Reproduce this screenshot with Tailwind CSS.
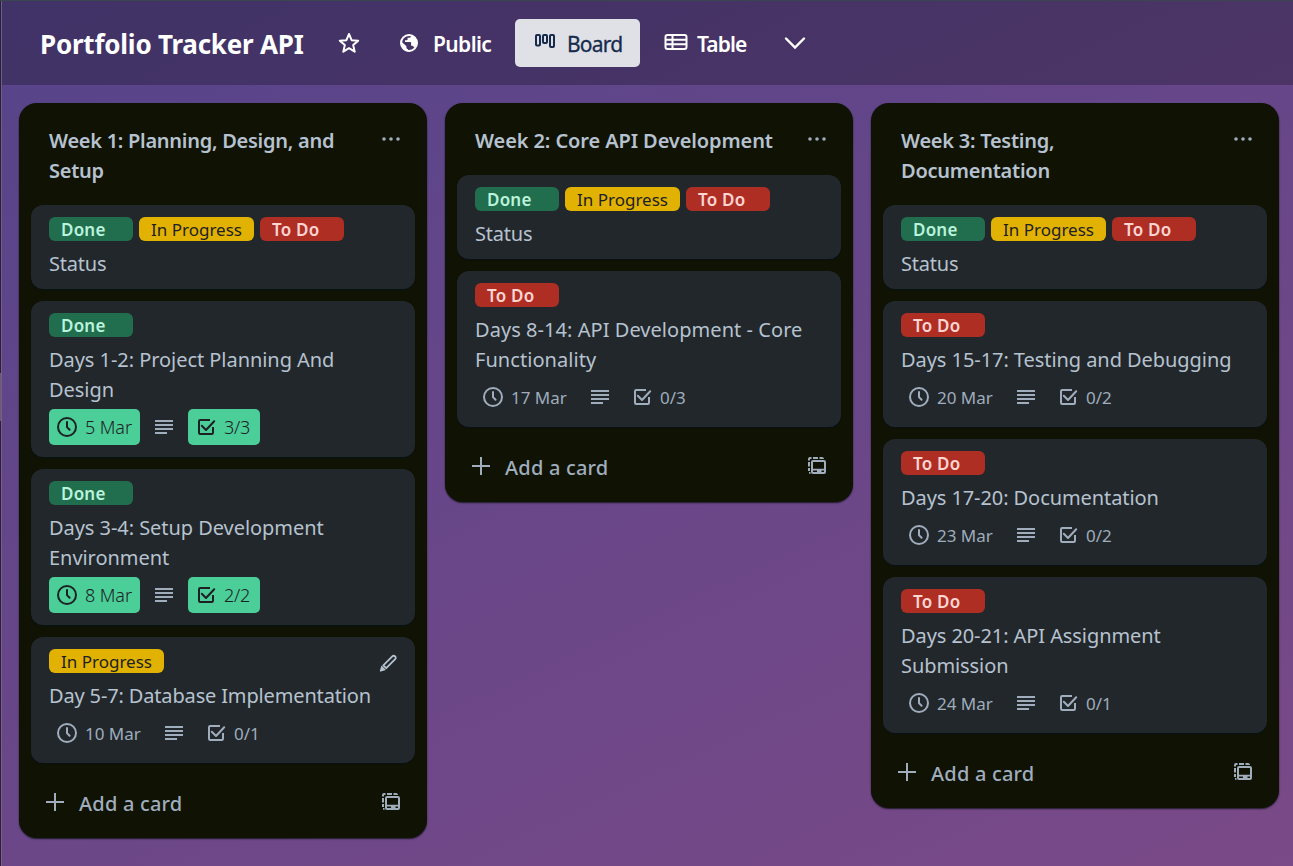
<!DOCTYPE html>
<html lang="en">
<head>
<meta charset="utf-8">
<title>Portfolio Tracker API</title>
<script src="https://cdn.jsdelivr.net/npm/@tailwindcss/browser@4"></script>
</head>
<body class="h-[866px] w-[1293px] overflow-hidden bg-[#56448a] font-['Noto_Sans','Open_Sans',sans-serif] text-[#b6c2cf]">

<svg class="hidden">
  <symbol id="clock" viewBox="0 0 24 24"><circle cx="12" cy="12" r="9" fill="none" stroke="currentColor" stroke-width="2"/><path d="M12 7v5.2l2.6 2.6" fill="none" stroke="currentColor" stroke-width="2" stroke-linecap="round"/></symbol>
  <symbol id="desc" viewBox="0 0 24 24"><path d="M3 5h18v2H3zM3 9h18v2H3zM3 13h18v2H3zM3 17h12v2H3z" fill="currentColor"/></symbol>
  <symbol id="check" viewBox="0 0 24 24"><path d="M16 5H6.2Q5 5 5 6.200v11.600Q5 19 6.200 19h11.600q1.200 0 1.200-1.200V12" fill="none" stroke="currentColor" stroke-width="2"/><path d="M7.800 10.800l4.200 4.200 8.200-8.800" fill="none" stroke="currentColor" stroke-width="2" stroke-linecap="round" stroke-linejoin="round"/></symbol>
  <symbol id="dots" viewBox="0 0 24 24"><g fill="currentColor"><circle cx="5" cy="12" r="1.800"/><circle cx="12" cy="12" r="1.800"/><circle cx="19" cy="12" r="1.800"/></g></symbol>
  <symbol id="plus" viewBox="0 0 24 24"><path d="M12 3v18M3 12h18" fill="none" stroke="currentColor" stroke-width="2"/></symbol>
  <symbol id="template" viewBox="0 0 24 24"><path d="M3 6.500V5q0-2 2-2h1.500v2H5v1.500zM8 3h5v2H8zM14.500 3H17q1.500 0 2 1.500V5h-4.500zM3 8h2v4.500H3zM3 14h2v3H3zM4 18h1.500v2H5q-1 0-1-1z" fill="currentColor"/><path fill-rule="evenodd" d="M8 6h11a2 2 0 0 1 2 2v10a2 2 0 0 1-2 2H8a2 2 0 0 1-2-2V8a2 2 0 0 1 2-2zm0 2v6.800h11V8zm0 8.500V18h4v-1.500zm8.500 0V18H19v-1.500z" fill="currentColor"/></symbol>
  <symbol id="pencil" viewBox="0 0 24 24"><path d="M7.300 14.300L16.300 5.300a1.900 1.900 0 0 1 2.700 0l.2.2a1.900 1.900 0 0 1 0 2.700L10.200 17.200z" fill="none" stroke="currentColor" stroke-width="1.800" stroke-linejoin="round"/><path d="M5.500 14.500l4.400 4.400-5 1.700q-1.200.2-1-1z" fill="currentColor"/></symbol>
</svg>

<div class="flex h-full w-full flex-col">
  <div class="h-px shrink-0 bg-[#394650]"></div>
  <div class="flex min-h-0 flex-1">
    <div class="flex w-px shrink-0 flex-col bg-[#24232f] pt-[372px]"><div class="h-12 bg-[#626069]"></div></div>

    <div class="flex min-w-0 flex-1 flex-col border-l border-white/10 bg-linear-[155deg] from-[#56448a] to-[#7a4987]">
      <header class="flex h-[84px] shrink-0 items-center bg-black/25 pl-[38px] text-[21px] font-semibold text-white">
        <h1 class="w-[265px] pt-[3px] text-[26px] font-bold tracking-[-0.22px] whitespace-nowrap">Portfolio Tracker API</h1>
        <svg class="mb-px ml-8 size-6" viewBox="0 0 24 24" fill="none" stroke="#fff" stroke-width="2" stroke-linejoin="round"><path d="M12 3l2.600 6.200 6.600.5-5 4.400 1.500 6.600L12 17.200l-5.700 3.500 1.500-6.600-5-4.400 6.600-.5z"/></svg>
        <svg class="mb-px ml-9 size-6" viewBox="0 0 24 24" fill="none"><circle cx="12" cy="12" r="8" stroke="#fff" stroke-width="2"/><path d="M4 10.200l5.400 5v1.200a1.500 1.500 0 0 0 1.500 1.500v2.500C6 19.700 3.500 15 4 10.200zM14.200 3.900v1a1.800 1.800 0 0 1-1.800 1.800h-1.800v1.600a.9.900 0 0 1-.9.900H8v1.900h5.200a.9.900 0 0 1 .9.900v2.700h.9a1.800 1.800 0 0 1 1.700 1.300l.6.700c2.500-2.600 3-5.400 2.200-7.900-.8-2.600-2.500-4.200-5.300-4.900z" fill="#fff"/></svg>
        <span class="ml-3 w-[82px] pt-1 tracking-[-0.6px]">Public</span>
        <div class="flex h-12 w-[125px] items-center rounded-[5px] bg-[#dfe1e6] pl-[18px] font-normal text-[#172b4d]">
          <svg class="mb-1 h-6 w-6" viewBox="0 0 24 24" fill="none" stroke="currentColor" stroke-width="2"><rect x="3" y="6" width="4" height="10.500" rx="1"/><rect x="10" y="6" width="4" height="8" rx="1"/><rect x="17" y="6" width="4" height="12" rx="1"/></svg>
          <span class="ml-2.5 pt-1 tracking-[-0.8px] [-webkit-text-stroke:0.3px]">Board</span>
        </div>
        <svg class="mb-[3px] ml-6 h-6 w-6" viewBox="0 0 24 24" fill="none" stroke="#fff" stroke-width="2"><rect x="1.500" y="5" width="21" height="14" rx="2"/><path d="M8.500 5v14M1.500 9.700h21M1.500 14.300h21"/></svg>
        <span class="ml-[9px] w-[52px] pt-1 tracking-[-0.9px]">Table</span>
        <svg class="ml-[34px] size-6" viewBox="0 0 24 24" fill="none" stroke="#fff" stroke-width="2.400" stroke-linecap="round"><path d="M3 7.500l9 9 9-9"/></svg>
      </header>

      <main class="flex items-start gap-[18px] pt-[18px] pl-[17px] text-xl leading-[30px]">

        <section class="w-[408px] rounded-[18px] bg-[#101204] px-3 shadow-[0_1px_1px_#09121680,0_1px_2px_#09121680]">
          <div class="flex justify-between pt-[23px] pr-3 pb-[19px] pl-[18px]">
            <h2 class="w-[300px] font-semibold tracking-[-0.27px]">Week 1: Planning, Design, and Setup</h2>
            <svg class="mt-px size-6 text-[#9fadbc]"><use href="#dots"/></svg>
          </div>
          <div class="flex flex-col gap-3">
            <article class="rounded-xl bg-[#22272b] px-[18px] py-3 shadow-[0_1px_1px_#091216]">
              <div class="mb-2 flex gap-1.5 text-[17px] leading-[26px]">
                <span class="h-6 w-21 rounded-md bg-[#216e4e] pl-3 font-semibold tracking-[0.2px] text-[#baf3db]">Done</span>
                <span class="h-6 w-[115px] rounded-md bg-[#e2b203] pl-3 whitespace-nowrap text-[#1d2125]">In Progress</span>
                <span class="h-6 w-21 rounded-md bg-[#ae2e24] pl-3 font-semibold tracking-[0.2px] text-[#ffd5d2]">To Do</span>
              </div>
              <p class="-mb-0.5 tracking-[-0.2px]">Status</p>
            </article>
            <article class="rounded-xl bg-[#22272b] px-[18px] py-3 shadow-[0_1px_1px_#091216]">
              <div class="mb-2 flex text-[17px] leading-[26px]"><span class="h-6 w-21 rounded-md bg-[#216e4e] pl-3 font-semibold tracking-[0.2px] text-[#baf3db]">Done</span></div>
              <p class="-mb-0.5 tracking-[-0.05px]">Days 1-2: Project Planning And Design</p>
              <div class="mt-1.5 flex gap-1.5 text-lg leading-9 font-light text-[#1d2125]">
                <span class="flex h-9 w-[91px] items-center gap-1.5 rounded-[5px] bg-[#4bce97] pl-1.5 tracking-[-0.1px] whitespace-nowrap"><svg class="size-6"><use href="#clock"/></svg>5 Mar</span>
                <span class="flex h-9 items-center px-1.5 text-[#9fadbc]"><svg class="size-6"><use href="#desc"/></svg></span>
                <span class="flex h-9 w-18 items-center gap-1.5 rounded-[5px] bg-[#4bce97] pl-1.5 tracking-[-0.3px]"><svg class="size-6"><use href="#check"/></svg>3/3</span>
              </div>
            </article>
            <article class="rounded-xl bg-[#22272b] px-[18px] py-3 shadow-[0_1px_1px_#091216]">
              <div class="mb-2 flex text-[17px] leading-[26px]"><span class="h-6 w-21 rounded-md bg-[#216e4e] pl-3 font-semibold tracking-[0.2px] text-[#baf3db]">Done</span></div>
              <p class="-mb-0.5 tracking-[-0.05px]">Days 3-4: Setup Development Environment</p>
              <div class="mt-1.5 flex gap-1.5 text-lg leading-9 font-light text-[#1d2125]">
                <span class="flex h-9 w-[91px] items-center gap-1.5 rounded-[5px] bg-[#4bce97] pl-1.5 tracking-[-0.1px] whitespace-nowrap"><svg class="size-6"><use href="#clock"/></svg>8 Mar</span>
                <span class="flex h-9 items-center px-1.5 text-[#9fadbc]"><svg class="size-6"><use href="#desc"/></svg></span>
                <span class="flex h-9 w-18 items-center gap-1.5 rounded-[5px] bg-[#4bce97] pl-1.5 tracking-[-0.3px]"><svg class="size-6"><use href="#check"/></svg>2/2</span>
              </div>
            </article>
            <article class="relative rounded-xl bg-[#22272b] px-[18px] py-3 shadow-[0_1px_1px_#091216]">
              <svg class="absolute top-3.5 right-[15px] size-6"><use href="#pencil"/></svg>
              <div class="mb-2 flex text-[17px] leading-[26px]"><span class="h-6 w-[115px] rounded-md bg-[#e2b203] pl-3 whitespace-nowrap text-[#1d2125]">In Progress</span></div>
              <p class="-mb-0.5 tracking-[-0.15px]">Day 5-7: Database Implementation</p>
              <div class="mt-1.5 flex gap-1.5 text-[17px] leading-9 text-[#9fadbc]">
                <span class="flex h-9 w-[101px] items-center gap-1.5 pl-1.5 whitespace-nowrap"><svg class="size-6"><use href="#clock"/></svg><span class="pt-px">10 Mar</span></span>
                <span class="flex h-9 items-center px-1.5"><svg class="size-6"><use href="#desc"/></svg></span>
                <span class="flex h-9 w-18 items-center gap-1.5 pl-1.5"><svg class="size-6"><use href="#check"/></svg><span class="pt-px">0/1</span></span>
              </div>
            </article>
          </div>
          <div class="flex h-[75px] items-center pt-1 pr-3 pl-3 text-[#9fadbc]">
            <svg class="mb-0.5 size-6"><use href="#plus"/></svg>
            <span class="ml-3 flex-1 pt-0.5 font-medium tracking-[0.2px]">Add a card</span>
            <svg class="mb-0.5 size-6"><use href="#template"/></svg>
          </div>
        </section>

        <section class="w-[408px] rounded-[18px] bg-[#101204] px-3 shadow-[0_1px_1px_#09121680,0_1px_2px_#09121680]">
          <div class="flex justify-between pt-[23px] pr-3 pb-[19px] pl-[18px]">
            <h2 class="w-[310px] font-semibold tracking-[-0.1px]">Week 2: Core API Development</h2>
            <svg class="mt-px size-6 text-[#9fadbc]"><use href="#dots"/></svg>
          </div>
          <div class="flex flex-col gap-3">
            <article class="rounded-xl bg-[#22272b] px-[18px] py-3 shadow-[0_1px_1px_#091216]">
              <div class="mb-2 flex gap-1.5 text-[17px] leading-[26px]">
                <span class="h-6 w-21 rounded-md bg-[#216e4e] pl-3 font-semibold tracking-[0.2px] text-[#baf3db]">Done</span>
                <span class="h-6 w-[115px] rounded-md bg-[#e2b203] pl-3 whitespace-nowrap text-[#1d2125]">In Progress</span>
                <span class="h-6 w-21 rounded-md bg-[#ae2e24] pl-3 font-semibold tracking-[0.2px] text-[#ffd5d2]">To Do</span>
              </div>
              <p class="-mb-0.5 tracking-[-0.2px]">Status</p>
            </article>
            <article class="rounded-xl bg-[#22272b] px-[18px] py-3 shadow-[0_1px_1px_#091216]">
              <div class="mb-2 flex text-[17px] leading-[26px]"><span class="h-6 w-21 rounded-md bg-[#ae2e24] pl-3 font-semibold tracking-[0.2px] text-[#ffd5d2]">To Do</span></div>
              <p class="-mb-0.5 tracking-[0.05px]">Days 8-14: API Development - Core Functionality</p>
              <div class="mt-1.5 flex gap-1.5 text-[17px] leading-9 text-[#9fadbc]">
                <span class="flex h-9 w-[101px] items-center gap-1.5 pl-1.5 whitespace-nowrap"><svg class="size-6"><use href="#clock"/></svg><span class="pt-px">17 Mar</span></span>
                <span class="flex h-9 items-center px-1.5"><svg class="size-6"><use href="#desc"/></svg></span>
                <span class="flex h-9 w-18 items-center gap-1.5 pl-1.5"><svg class="size-6"><use href="#check"/></svg><span class="pt-px">0/3</span></span>
              </div>
            </article>
          </div>
          <div class="flex h-[75px] items-center pt-1 pr-3 pl-3 text-[#9fadbc]">
            <svg class="mb-0.5 size-6"><use href="#plus"/></svg>
            <span class="ml-3 flex-1 pt-0.5 font-medium tracking-[0.2px]">Add a card</span>
            <svg class="mb-0.5 size-6"><use href="#template"/></svg>
          </div>
        </section>

        <section class="w-[408px] rounded-[18px] bg-[#101204] px-3 shadow-[0_1px_1px_#09121680,0_1px_2px_#09121680]">
          <div class="flex justify-between pt-[23px] pr-3 pb-[19px] pl-[18px]">
            <h2 class="w-[300px] font-semibold tracking-[-0.25px]">Week 3: Testing,<br>Documentation</h2>
            <svg class="mt-px size-6 text-[#9fadbc]"><use href="#dots"/></svg>
          </div>
          <div class="flex flex-col gap-3">
            <article class="rounded-xl bg-[#22272b] px-[18px] py-3 shadow-[0_1px_1px_#091216]">
              <div class="mb-2 flex gap-1.5 text-[17px] leading-[26px]">
                <span class="h-6 w-21 rounded-md bg-[#216e4e] pl-3 font-semibold tracking-[0.2px] text-[#baf3db]">Done</span>
                <span class="h-6 w-[115px] rounded-md bg-[#e2b203] pl-3 whitespace-nowrap text-[#1d2125]">In Progress</span>
                <span class="h-6 w-21 rounded-md bg-[#ae2e24] pl-3 font-semibold tracking-[0.2px] text-[#ffd5d2]">To Do</span>
              </div>
              <p class="-mb-0.5 tracking-[-0.2px]">Status</p>
            </article>
            <article class="rounded-xl bg-[#22272b] px-[18px] py-3 shadow-[0_1px_1px_#091216]">
              <div class="mb-2 flex text-[17px] leading-[26px]"><span class="h-6 w-21 rounded-md bg-[#ae2e24] pl-3 font-semibold tracking-[0.2px] text-[#ffd5d2]">To Do</span></div>
              <p class="-mb-0.5 tracking-[-0.06px]">Days 15-17: Testing and Debugging</p>
              <div class="mt-1.5 flex gap-1.5 text-[17px] leading-9 text-[#9fadbc]">
                <span class="flex h-9 w-[101px] items-center gap-1.5 pl-1.5 whitespace-nowrap"><svg class="size-6"><use href="#clock"/></svg><span class="pt-px">20 Mar</span></span>
                <span class="flex h-9 items-center px-1.5"><svg class="size-6"><use href="#desc"/></svg></span>
                <span class="flex h-9 w-18 items-center gap-1.5 pl-1.5"><svg class="size-6"><use href="#check"/></svg><span class="pt-px">0/2</span></span>
              </div>
            </article>
            <article class="rounded-xl bg-[#22272b] px-[18px] py-3 shadow-[0_1px_1px_#091216]">
              <div class="mb-2 flex text-[17px] leading-[26px]"><span class="h-6 w-21 rounded-md bg-[#ae2e24] pl-3 font-semibold tracking-[0.2px] text-[#ffd5d2]">To Do</span></div>
              <p class="-mb-0.5 tracking-[-0.08px]">Days 17-20: Documentation</p>
              <div class="mt-1.5 flex gap-1.5 text-[17px] leading-9 text-[#9fadbc]">
                <span class="flex h-9 w-[101px] items-center gap-1.5 pl-1.5 whitespace-nowrap"><svg class="size-6"><use href="#clock"/></svg><span class="pt-px">23 Mar</span></span>
                <span class="flex h-9 items-center px-1.5"><svg class="size-6"><use href="#desc"/></svg></span>
                <span class="flex h-9 w-18 items-center gap-1.5 pl-1.5"><svg class="size-6"><use href="#check"/></svg><span class="pt-px">0/2</span></span>
              </div>
            </article>
            <article class="rounded-xl bg-[#22272b] px-[18px] py-3 shadow-[0_1px_1px_#091216]">
              <div class="mb-2 flex text-[17px] leading-[26px]"><span class="h-6 w-21 rounded-md bg-[#ae2e24] pl-3 font-semibold tracking-[0.2px] text-[#ffd5d2]">To Do</span></div>
              <p class="-mb-0.5 tracking-[-0.08px]">Days 20-21: API Assignment Submission</p>
              <div class="mt-1.5 flex gap-1.5 text-[17px] leading-9 text-[#9fadbc]">
                <span class="flex h-9 w-[101px] items-center gap-1.5 pl-1.5 whitespace-nowrap"><svg class="size-6"><use href="#clock"/></svg><span class="pt-px">24 Mar</span></span>
                <span class="flex h-9 items-center px-1.5"><svg class="size-6"><use href="#desc"/></svg></span>
                <span class="flex h-9 w-18 items-center gap-1.5 pl-1.5"><svg class="size-6"><use href="#check"/></svg><span class="pt-px">0/1</span></span>
              </div>
            </article>
          </div>
          <div class="flex h-[75px] items-center pt-1 pr-3 pl-3 text-[#9fadbc]">
            <svg class="mb-0.5 size-6"><use href="#plus"/></svg>
            <span class="ml-3 flex-1 pt-0.5 font-medium tracking-[0.2px]">Add a card</span>
            <svg class="mb-0.5 size-6"><use href="#template"/></svg>
          </div>
        </section>

      </main>
    </div>
  </div>
</div>
</body>
</html>
